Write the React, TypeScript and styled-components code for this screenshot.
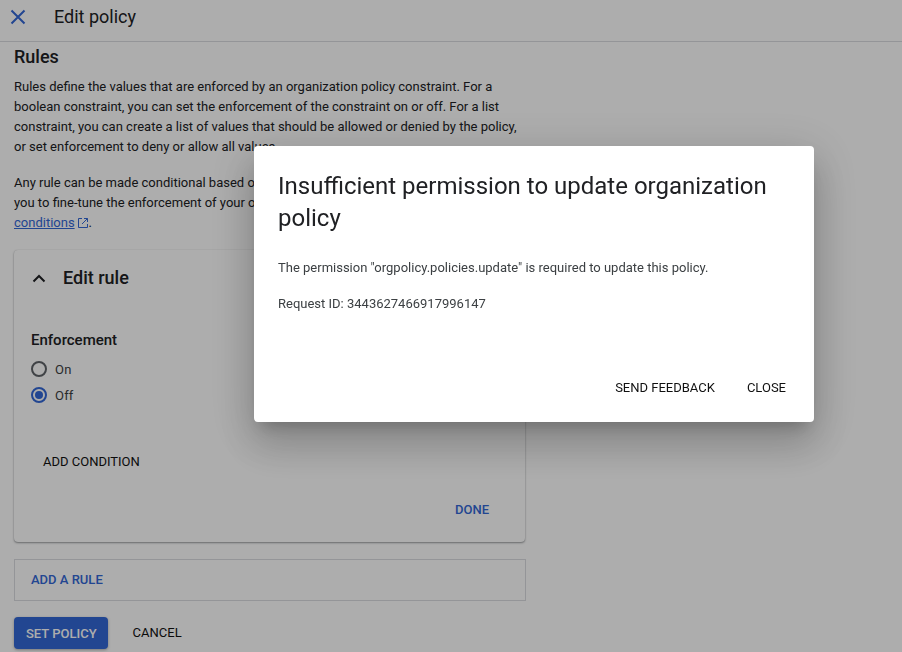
import React from 'react';
import styled, { createGlobalStyle } from 'styled-components';

const GlobalStyle = createGlobalStyle`
  html, body {
    margin: 0;
    padding: 0;
    height: 100%;
    overflow: hidden;
    background: #fff;
    font-family: Roboto, "Liberation Sans", sans-serif;
    color: #202124;
  }
`;

const Page = styled.div`
  width: 902px;
  height: 652px;
  overflow: hidden;
`;

const Header = styled.header`
  display: flex;
  align-items: center;
  box-sizing: border-box;
  height: 42px;
  padding: 0 0 8px 8px;
  border-bottom: 1px solid #dadce0;
`;

const CloseIcon = styled.button`
  display: flex;
  width: 20px;
  height: 20px;
  padding: 0;
  border: 0;
  background: none;
  color: #3367d6;
`;

const HeaderTitle = styled.h1`
  margin: 0 0 0 26px;
  font-size: 18px;
  font-weight: 400;
  line-height: 24px;
`;

const Content = styled.main`
  width: 512px;
  padding: 3px 0 0 14px;
`;

const SectionTitle = styled.h2`
  margin: 0;
  font-size: 18px;
  font-weight: 500;
  line-height: 24px;
`;

const Paragraph = styled.p`
  margin: 8px 0 0;
  font-size: 13px;
  line-height: 20px;
  & + & {
    margin-top: 16px;
  }
`;

const DocLink = styled.a`
  color: #3367d6;
  text-decoration: underline;
`;

const ExternalIcon = styled.svg`
  margin: 0 0 -2px 2px;
  color: #3367d6;
`;

const RuleCard = styled.section`
  display: flex;
  flex-direction: column;
  box-sizing: border-box;
  width: 511px;
  height: 292px;
  margin-top: 17px;
  padding: 16px 16px 16px 17px;
  border-radius: 4px;
  box-shadow: 0 1px 2px rgba(60, 64, 67, 0.5), 0 0 1px rgba(60, 64, 67, 0.2);
`;

const RuleHeader = styled.div`
  display: flex;
  align-items: center;
  gap: 16px;
  height: 24px;
`;

const RuleTitle = styled.h3`
  margin: 0;
  font-size: 18px;
  font-weight: 500;
  line-height: 24px;
`;

const FieldLabel = styled.div`
  margin-top: 40px;
  font-size: 15px;
  font-weight: 500;
  line-height: 20px;
`;

const RadioRow = styled.label`
  display: flex;
  align-items: center;
  gap: 8px;
  height: 26px;
  font-size: 13px;
  letter-spacing: 0.2px;
  color: #3c4043;
  &:first-of-type {
    margin-top: 6px;
  }
`;

const RadioMark = styled.span<{ $checked?: boolean }>`
  position: relative;
  box-sizing: border-box;
  width: 16px;
  height: 16px;
  border-radius: 50%;
  border: 2px solid ${({ $checked }) => ($checked ? '#3367d6' : '#5f6368')};
  &::after {
    content: '';
    display: ${({ $checked }) => ($checked ? 'block' : 'none')};
    position: absolute;
    inset: 2px;
    border-radius: 50%;
    background: #3367d6;
  }
`;

const TextButton = styled.button<{ $primary?: boolean }>`
  padding: 0;
  border: 0;
  background: none;
  font-family: inherit;
  font-size: 13px;
  font-weight: ${({ $primary }) => ($primary ? 500 : 400)};
  line-height: 20px;
  color: ${({ $primary }) => ($primary ? '#3367d6' : '#111')};
`;

const AddCondition = styled(TextButton)`
  align-self: flex-start;
  margin: 44px 0 0 12px;
`;

const DoneRow = styled.div`
  display: flex;
  justify-content: flex-end;
  margin: 28px 20px 0 0;
`;

const AddRuleBox = styled.div`
  display: flex;
  align-items: center;
  box-sizing: border-box;
  width: 512px;
  height: 42px;
  margin-top: 17px;
  padding-left: 16px;
  border: 1px solid #dadce0;
`;

const Actions = styled.div`
  display: flex;
  align-items: center;
  gap: 25px;
  margin-top: 16px;
`;

const PrimaryButton = styled.button`
  height: 32px;
  padding: 0 11px 0 12px;
  border: 0;
  border-radius: 4px;
  background: #3367d6;
  color: #fff;
  font-family: inherit;
  font-size: 13px;
  font-weight: 500;
  box-shadow: 0 1px 3px rgba(60, 64, 67, 0.4);
`;

const Backdrop = styled.div`
  position: fixed;
  inset: 0;
  padding: 146px 0 0 254px;
  background: rgba(0, 0, 0, 0.32);
`;

const Dialog = styled.div`
  display: flex;
  flex-direction: column;
  box-sizing: border-box;
  width: 560px;
  height: 276px;
  padding: 24px;
  border-radius: 4px;
  background: #fff;
  box-shadow: 0 11px 15px -7px rgba(0, 0, 0, 0.2), 0 24px 38px 3px rgba(0, 0, 0, 0.14),
    0 9px 46px 8px rgba(0, 0, 0, 0.12);
`;

const DialogTitle = styled.h2`
  margin: 0 0 7px;
  font-size: 24px;
  font-weight: 400;
  line-height: 32px;
`;

const DialogText = styled.p`
  margin: 18px 0 0;
  font-size: 13px;
  line-height: 18px;
  color: #3c4043;
`;

const DialogActions = styled.div`
  display: flex;
  justify-content: flex-end;
  gap: 32px;
  margin: auto 4px 0 0;
`;

const App: React.FC = () => (
  <Page>
    <GlobalStyle />
    <Header>
      <CloseIcon aria-label="Close">
        <svg width="20" height="20" viewBox="0 0 20 20" fill="none" stroke="currentColor" strokeWidth="2">
          <path d="M3.5 3.5l13 13M16.5 3.5l-13 13" />
        </svg>
      </CloseIcon>
      <HeaderTitle>Edit policy</HeaderTitle>
    </Header>
    <Content>
      <SectionTitle>Rules</SectionTitle>
      <Paragraph>
        Rules define the values that are enforced by an organization policy constraint. For a
        <br />
        boolean constraint, you can set the enforcement of the constraint on or off. For a list
        <br />
        constraint, you can create a list of values that should be allowed or denied by the policy,
        <br />
        or set enforcement to deny or allow all values.
      </Paragraph>
      <Paragraph>
        Any rule can be made conditional based on the tags of a resource. This allows
        <br />
        you to fine-tune the enforcement of your organization policy. Learn more about
        <br />
        <DocLink href="#">conditions</DocLink>
        <ExternalIcon width="12" height="12" viewBox="0 0 12 12" fill="none" stroke="currentColor" strokeWidth="1">
          <path d="M5 1.5H1.5v9h9V7M7 1.5h3.5V5M10.5 1.5L5 7" />
        </ExternalIcon>
        .
      </Paragraph>
      <RuleCard>
        <RuleHeader>
          <svg width="16" height="16" viewBox="0 0 16 16" fill="none" stroke="#202124" strokeWidth="2">
            <path d="M2.5 11.5L8 6l5.5 5.5" />
          </svg>
          <RuleTitle>Edit rule</RuleTitle>
        </RuleHeader>
        <FieldLabel>Enforcement</FieldLabel>
        <RadioRow>
          <RadioMark />
          On
        </RadioRow>
        <RadioRow>
          <RadioMark $checked />
          Off
        </RadioRow>
        <AddCondition>ADD CONDITION</AddCondition>
        <DoneRow>
          <TextButton $primary>DONE</TextButton>
        </DoneRow>
      </RuleCard>
      <AddRuleBox>
        <TextButton $primary>ADD A RULE</TextButton>
      </AddRuleBox>
      <Actions>
        <PrimaryButton>SET POLICY</PrimaryButton>
        <TextButton>CANCEL</TextButton>
      </Actions>
    </Content>
    <Backdrop>
      <Dialog>
        <DialogTitle>Insufficient permission to update organization policy</DialogTitle>
        <DialogText>The permission "orgpolicy.policies.update" is required to update this policy.</DialogText>
        <DialogText>Request ID: 3443627466917996147</DialogText>
        <DialogActions>
          <TextButton>SEND FEEDBACK</TextButton>
          <TextButton>CLOSE</TextButton>
        </DialogActions>
      </Dialog>
    </Backdrop>
  </Page>
);

export default App;
